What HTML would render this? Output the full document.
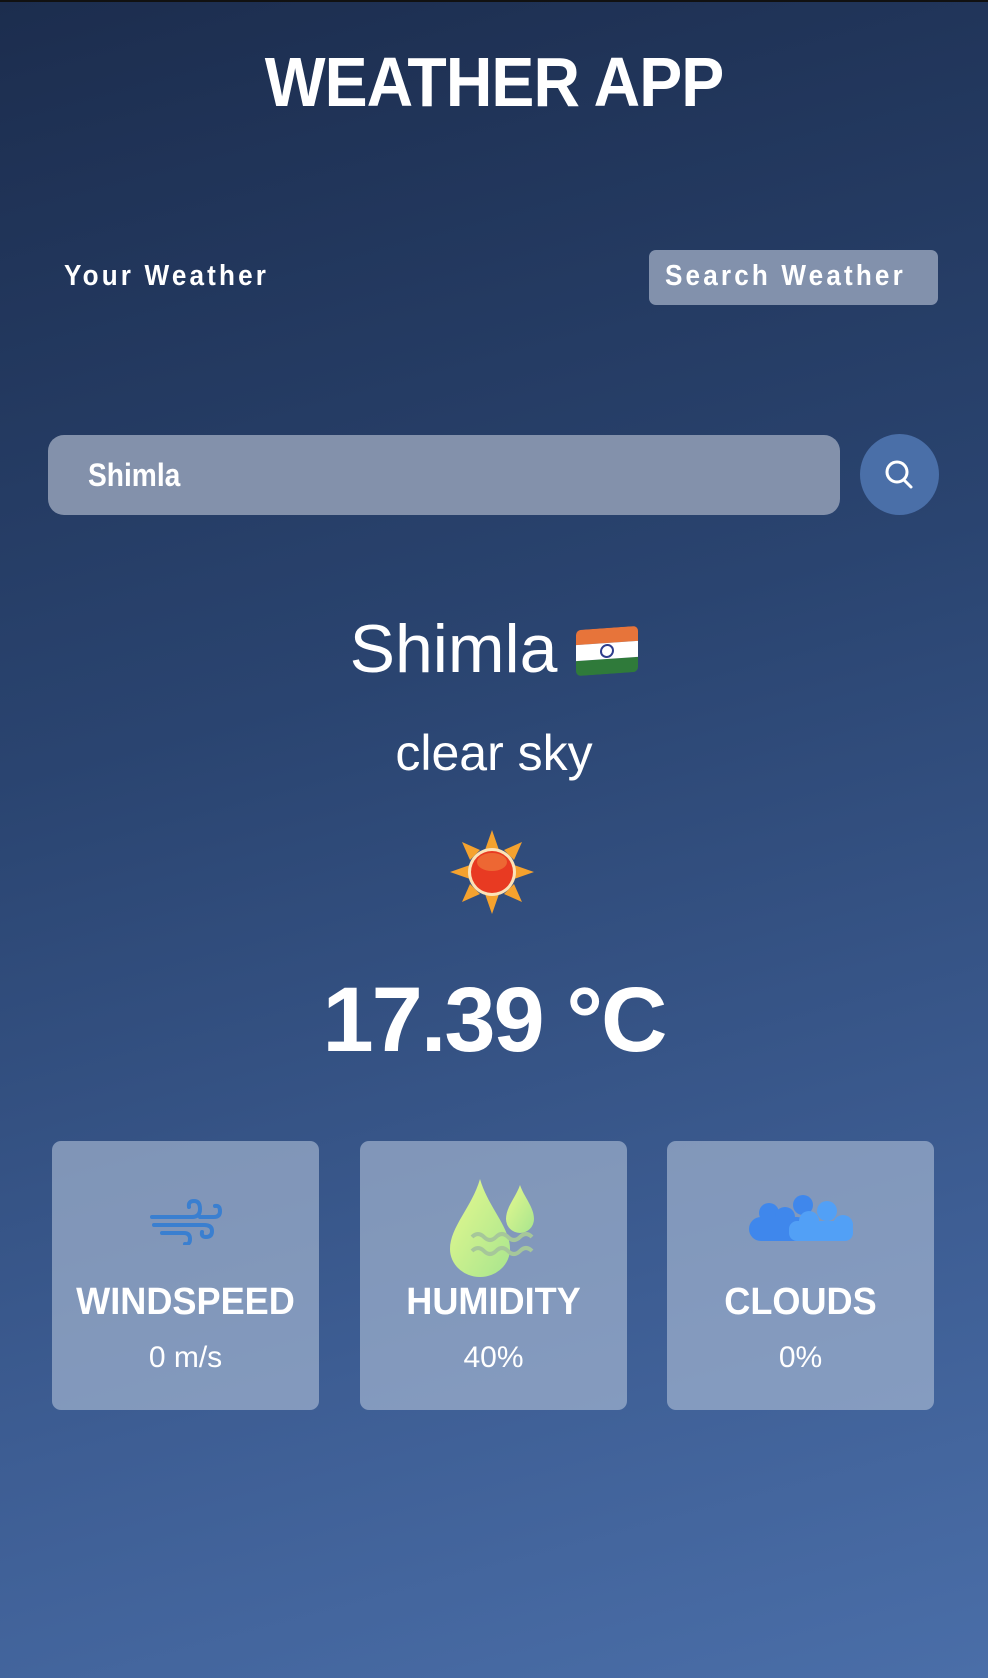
<!DOCTYPE html>
<html><head><meta charset="utf-8"><style>
*{margin:0;padding:0;box-sizing:border-box}
html,body{width:988px;height:1678px;overflow:hidden}
body{background:linear-gradient(165deg,#1c2d4e 0%,#2a4470 40%,#3d5d93 75%,#4a6ea8 100%);font-family:"Liberation Sans",sans-serif;color:#fff;position:relative;border-top:2px solid #111}
.abs{position:absolute}
.title{left:0;width:988px;top:40px;text-align:center;font-size:70px;font-weight:bold;letter-spacing:-1px;transform:scaleX(0.92)}
.yw{left:64px;top:258px;font-size:29px;font-weight:bold;letter-spacing:3.5px;transform:scaleX(0.9);transform-origin:left;white-space:nowrap}
.btn{left:649px;top:248px;width:289px;height:55px;background:#8291ac;border-radius:7px}
.btn span{position:absolute;left:16px;top:10px;font-size:29px;font-weight:bold;letter-spacing:3.5px;white-space:nowrap;transform:scaleX(0.9);transform-origin:left}
.inp{left:48px;top:433px;width:792px;height:80px;background:#8391ab;border-radius:16px}
.inp span{position:absolute;left:40px;top:22px;font-size:32px;font-weight:bold;transform:scaleX(0.88);transform-origin:left}
.circ{left:860px;top:432px;width:79px;height:81px;border-radius:50%;background:#4a6fa8}
.city{left:0;width:988px;top:608px;text-align:center;font-size:68px}
.sky{left:0;width:988px;top:722px;text-align:center;font-size:50px}
.temp{left:0;width:988px;top:966px;text-align:center;font-size:92px;font-weight:bold;letter-spacing:-2px}
.card{top:1139px;width:267px;height:269px;background:rgba(175,190,214,.62);border-radius:9px;text-align:center}
.card .l{position:absolute;top:140px;left:0;width:100%;font-size:38px;font-weight:bold;transform:scaleX(0.95)}
.card .v{position:absolute;top:200px;left:0;width:100%;font-size:30px}
.card svg{position:absolute}
</style></head><body>
<div class="abs title">WEATHER APP</div>
<div class="abs yw">Your Weather</div>
<div class="abs btn"><span>Search Weather</span></div>
<div class="abs inp"><span>Shimla</span></div>
<div class="abs circ"><svg width="79" height="81" viewBox="0 0 79 81"><circle cx="37" cy="38" r="10" fill="none" stroke="#fff" stroke-width="3"/><line x1="44" y1="46" x2="51" y2="53" stroke="#fff" stroke-width="3" stroke-linecap="round"/></svg></div>
<div class="abs city">Shimla <span style="display:inline-block;width:62px;height:46px;vertical-align:-2px;border-radius:5px;overflow:hidden;transform:skewY(-4deg)"><span style="display:block;height:15px;background:#e7743a"></span><span style="display:block;height:16px;background:#fff;position:relative"><span style="position:absolute;left:24px;top:1px;width:14px;height:14px;border:2px solid #2e3d8c;border-radius:50%"></span></span><span style="display:block;height:15px;background:#2f7a3a"></span></span></div>
<div class="abs sky">clear sky</div>
<svg class="abs" style="left:448px;top:826px" width="88" height="88" viewBox="0 0 88 88">
<g fill="#f5a22e"><polygon points="44,2 51,22 37,22"/><polygon points="44,86 51,66 37,66"/><polygon points="2,44 22,37 22,51"/><polygon points="86,44 66,37 66,51"/><polygon points="14,14 32,22 22,32"/><polygon points="74,14 66,32 56,22"/><polygon points="14,74 22,56 32,66"/><polygon points="74,74 56,66 66,56"/></g>
<circle cx="44" cy="44" r="24" fill="#fbe3b8"/><circle cx="44" cy="44" r="21" fill="#e83a22"/><ellipse cx="44" cy="34" rx="15" ry="9" fill="#f07a3a" opacity=".7"/></svg>
<div class="abs temp">17.39 °C</div>
<div class="abs card" style="left:52px">
<svg style="left:96px;top:54px" width="80" height="50" viewBox="0 0 80 50" fill="none" stroke="#3a7fd0" stroke-width="4" stroke-linecap="round"><path d="M4 22H44q8 0 8-8t-6-8q-6 0-5 6"/><path d="M6 30H56q8 0 8 6t-6 6q-5 0-4-5"/><path d="M14 38H36q6 0 6 6t-5 5"/><path d="M52 22h14q6 0 6-6t-5-5"/></svg>
<div class="l">WINDSPEED</div><div class="v">0 m/s</div></div>
<div class="abs card" style="left:360px">
<svg style="left:88px;top:36px" width="95" height="100" viewBox="0 0 95 100"><defs><linearGradient id="g" x1="0" y1="0" x2="1" y2="1"><stop offset="0" stop-color="#e6f98e"/><stop offset="1" stop-color="#a8e58e"/></linearGradient></defs><path d="M32 2C24 30 2 50 2 72a30 28 0 0 0 60 0C62 50 40 30 32 2z" fill="url(#g)"/><path d="M72 8C68 20 58 30 58 42a14 14 0 0 0 28 0C86 30 76 20 72 8z" fill="url(#g)"/><g fill="none" stroke="#a6c79a" stroke-width="4"><path d="M24 60q6-6 12 0t12 0 12 0 12 0 12 0"/><path d="M24 74q6-6 12 0t12 0 12 0 12 0 12 0"/></g></svg>
<div class="l">HUMIDITY</div><div class="v">40%</div></div>
<div class="abs card" style="left:667px">
<svg style="left:82px;top:54px" width="104" height="46" viewBox="0 0 104 46"><g fill="#3f87ec"><circle cx="20" cy="18" r="10"/><circle cx="54" cy="10" r="10"/><circle cx="36" cy="22" r="10"/><rect x="0" y="22" width="60" height="24" rx="12"/></g><g fill="#52a0f6"><circle cx="78" cy="16" r="10"/><circle cx="60" cy="26" r="10"/><circle cx="94" cy="30" r="10"/><rect x="40" y="26" width="64" height="20" rx="8"/></g></svg>
<div class="l">CLOUDS</div><div class="v">0%</div></div>
</body></html>
